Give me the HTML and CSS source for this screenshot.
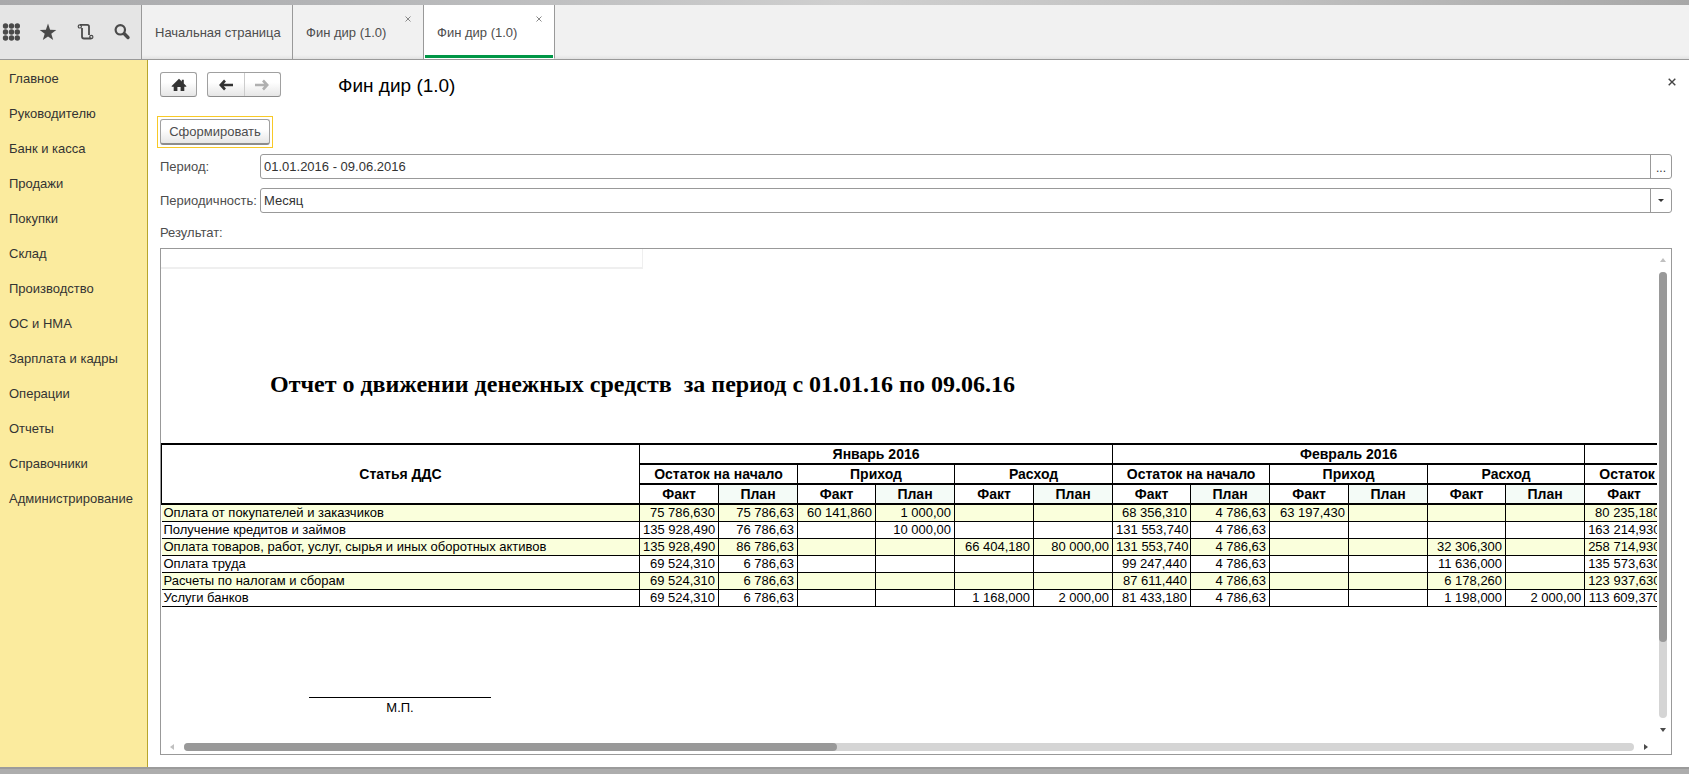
FILE: index.html
```html
<!DOCTYPE html>
<html lang="ru">
<head>
<meta charset="utf-8">
<title>Фин дир (1.0)</title>
<link rel="stylesheet" href="styles.css">
</head>
<body>
<div class="app">
  <div class="edge-top"></div>
  <header class="topbar">
    <div class="tools">
      <button class="tool" type="button" aria-label="Меню">
        <svg width="18" height="18" viewBox="0 0 18 18" fill="#4a4a4a"><circle cx="3.500" cy="3" r="2.700"/><circle cx="9.500" cy="3" r="2.700"/><circle cx="15.300" cy="3" r="2.700"/><circle cx="3.500" cy="9" r="2.700"/><circle cx="9.500" cy="9" r="2.700"/><circle cx="15.300" cy="9" r="2.700"/><circle cx="3.500" cy="15" r="2.700"/><circle cx="9.500" cy="15" r="2.700"/><circle cx="15.300" cy="15" r="2.700"/></svg>
      </button>
      <button class="tool" type="button" aria-label="Избранное">
        <svg width="18" height="18" viewBox="0 0 18 18" fill="#4a4a4a"><path d="M9 .6l2.100 6.200 6.200.1-5 3.900 1.900 6.300L9 13.400l-5.200 3.700 1.900-6.300-5-3.900 6.200-.1z"/></svg>
      </button>
      <button class="tool" type="button" aria-label="История">
        <svg width="18" height="18" viewBox="0 0 18 18" fill="none" stroke="#4a4a4a"><path stroke-width="1.800" d="M4 1.900h7.300q1.700 0 1.700 1.700V12"/><path stroke-width="1.800" d="M6 5v8.500q0 2 2 2h7.500"/><circle cx="3.800" cy="3.400" r="1.600" stroke-width="1.200"/><circle cx="15.300" cy="13.900" r="1.600" stroke-width="1.200"/></svg>
      </button>
      <button class="tool" type="button" aria-label="Поиск">
        <svg width="18" height="18" viewBox="0 0 18 18" fill="none" stroke="#4a4a4a"><circle cx="7.300" cy="6.800" r="4.700" stroke-width="2.200"/><path d="M11.300 10.800l3.700 3.700" stroke-width="3.400" stroke-linecap="round"/></svg>
      </button>
    </div>
    <nav class="tabs">
      <a class="tab tab-home" href="#">Начальная страница</a>
      <a class="tab" href="#">Фин дир (1.0)<svg class="tab-close" width="6" height="6" viewBox="0 0 6 6" stroke="#888"><path d="M.5.5l5 5M5.500.5l-5 5"/></svg></a>
      <a class="tab tab-active" href="#">Фин дир (1.0)<svg class="tab-close" width="6" height="6" viewBox="0 0 6 6" stroke="#888"><path d="M.5.5l5 5M5.500.5l-5 5"/></svg></a>
    </nav>
  </header>
  <div class="body">
    <nav class="sidebar">
      <a href="#">Главное</a>
      <a href="#">Руководителю</a>
      <a href="#">Банк и касса</a>
      <a href="#">Продажи</a>
      <a href="#">Покупки</a>
      <a href="#">Склад</a>
      <a href="#">Производство</a>
      <a href="#">ОС и НМА</a>
      <a href="#">Зарплата и кадры</a>
      <a href="#">Операции</a>
      <a href="#">Отчеты</a>
      <a href="#">Справочники</a>
      <a href="#">Администрирование</a>
    </nav>
    <main class="main">
      <div class="titlebar">
        <button class="btn btn-home" type="button" aria-label="Домой">
          <svg width="16" height="14" viewBox="0 0 16 14" fill="#333"><path d="M8 .8l2.800 2.700V1.800h2v3.600L15.300 8v.8H13.300V13H9.600V9H6.400v4H2.700V8.800H.7V8z"/></svg>
        </button>
        <div class="btn nav-pair">
          <button type="button" aria-label="Назад"><svg width="14" height="12" viewBox="0 0 14 12"><path d="M6 1.500L1.800 6 6 10.500M2 6h12" fill="none" stroke="#333" stroke-width="2.600"/></svg></button>
          <button type="button" aria-label="Вперед"><svg width="14" height="12" viewBox="0 0 14 12"><path d="M8 1.500L12.200 6 8 10.500M12 6H0" fill="none" stroke="#b0b0b0" stroke-width="2.600"/></svg></button>
        </div>
        <h1>Фин дир (1.0)</h1>
        <button class="close" type="button" aria-label="Закрыть"><svg width="8" height="8" viewBox="0 0 8 8" stroke="#444" stroke-width="1.400"><path d="M.7.7l6.600 6.600M7.300.7L.7 7.300"/></svg></button>
      </div>
      <div class="command"><button class="btn btn-run" type="button">Сформировать</button></div>
      <div class="field">
        <label for="period">Период:</label>
        <div class="box"><input id="period" type="text" value="01.01.2016 - 09.06.2016"><button type="button" class="more">...</button></div>
      </div>
      <div class="field">
        <label for="step">Периодичность:</label>
        <div class="box"><select id="step"><option>Месяц</option></select><span class="drop"><svg width="6" height="3" viewBox="0 0 6 3" fill="#333"><path d="M0 0h6L3 3z"/></svg></span></div>
      </div>
      <div class="result-label">Результат:</div>
      <section class="panel">
        <div class="sheet">
          <div class="frame"></div>
          <h2>Отчет о движении денежных средств &nbsp;за период с 01.01.16 по 09.06.16</h2>
          <table>
            <colgroup><col class="c-name"><col class="c-a" span="2"><col class="c-b"><col class="c-a" span="3"><col class="c-b"><col class="c-a" span="3"><col class="c-b"><col class="c-a" span="3"></colgroup>
            <thead>
              <tr><th rowspan="3">Статья ДДС</th><th colspan="6">Январь 2016</th><th colspan="6">Февраль 2016</th><th colspan="2"></th></tr>
              <tr><th colspan="2">Остаток на начало</th><th colspan="2">Приход</th><th colspan="2">Расход</th><th colspan="2">Остаток на начало</th><th colspan="2">Приход</th><th colspan="2">Расход</th><th colspan="2">Остаток на начало</th></tr>
              <tr><th>Факт</th><th class="p">План</th><th>Факт</th><th class="p">План</th><th>Факт</th><th class="p">План</th><th>Факт</th><th class="p">План</th><th>Факт</th><th class="p">План</th><th>Факт</th><th class="p">План</th><th>Факт</th><th class="p"></th></tr>
            </thead>
            <tbody>
              <tr><td>Оплата от покупателей и заказчиков</td><td>75 786,630</td><td>75 786,63</td><td>60 141,860</td><td>1 000,00</td><td></td><td></td><td>68 356,310</td><td>4 786,63</td><td>63 197,430</td><td></td><td></td><td></td><td>80 235,180</td><td></td></tr>
              <tr><td>Получение кредитов и займов</td><td>135 928,490</td><td>76 786,63</td><td></td><td>10 000,00</td><td></td><td></td><td>131 553,740</td><td>4 786,63</td><td></td><td></td><td></td><td></td><td>163 214,930</td><td></td></tr>
              <tr><td>Оплата товаров, работ, услуг, сырья и иных оборотных активов</td><td>135 928,490</td><td>86 786,63</td><td></td><td></td><td>66 404,180</td><td>80 000,00</td><td>131 553,740</td><td>4 786,63</td><td></td><td></td><td>32 306,300</td><td></td><td>258 714,930</td><td></td></tr>
              <tr><td>Оплата труда</td><td>69 524,310</td><td>6 786,63</td><td></td><td></td><td></td><td></td><td>99 247,440</td><td>4 786,63</td><td></td><td></td><td>11 636,000</td><td></td><td>135 573,630</td><td></td></tr>
              <tr><td>Расчеты по налогам и сборам</td><td>69 524,310</td><td>6 786,63</td><td></td><td></td><td></td><td></td><td>87 611,440</td><td>4 786,63</td><td></td><td></td><td>6 178,260</td><td></td><td>123 937,630</td><td></td></tr>
              <tr><td>Услуги банков</td><td>69 524,310</td><td>6 786,63</td><td></td><td></td><td>1 168,000</td><td>2 000,00</td><td>81 433,180</td><td>4 786,63</td><td></td><td></td><td>1 198,000</td><td>2 000,00</td><td>113 609,370</td><td></td></tr>
            </tbody>
          </table>
          <div class="stamp">М.П.</div>
        </div>
        <div class="vbar">
          <svg width="6" height="4" viewBox="0 0 6 4" fill="#c0c0c0"><path d="M3 0l3 4H0z"/></svg>
          <div class="track"><div class="thumb"></div></div>
          <svg width="6" height="4" viewBox="0 0 6 4" fill="#4a4a4a"><path d="M0 0h6L3 4z"/></svg>
        </div>
        <div class="hbar">
          <svg width="4" height="6" viewBox="0 0 4 6" fill="#c0c0c0"><path d="M4 0v6L0 3z"/></svg>
          <div class="track"><div class="thumb"></div></div>
          <svg width="4" height="6" viewBox="0 0 4 6" fill="#4a4a4a"><path d="M0 0v6l4-3z"/></svg>
        </div>
      </section>
    </main>
  </div>
  <div class="edge-bottom"></div>
</div>
</body>
</html>
```
FILE: styles.css
```css
* { box-sizing: border-box; }
body { margin: 0; font: 13px/16px "Liberation Sans", Arial, sans-serif; color: #333; background: #fff; }
button, input, select { font: inherit; color: inherit; margin: 0; padding: 0; border: 0; background: none; }
svg { display: block; flex: none; }
a { color: inherit; text-decoration: none; }

.app { display: flex; flex-direction: column; height: 100vh; overflow: hidden; }
.edge-top { height: 5px; background: linear-gradient(90deg, #a9a9ab, #b4b5b7 20%, #cfcfcf 50%, #c0c0c0 75%, #a8a8a8); }
.edge-bottom { height: 7px; background: #adadad; border-top: 2px solid #9b9b9b; }

.topbar { display: flex; height: 55px; background: #f1f1f1; border-bottom: 1px solid #999; }
.tools { display: flex; align-items: center; gap: 19px; width: 142px; padding-left: 2px; background: #e5e5e5; border-right: 1px solid #999; }
.tool { width: 18px; height: 18px; }
.tabs { display: flex; flex: 1; background: linear-gradient(#f1f1f1 50px, #e2e2e2); }
.tab { position: relative; display: flex; align-items: center; width: 131px; padding: 2px 13px 0; border-right: 1px solid #999; color: #4d4d4d; white-space: nowrap; }
.tab-home { width: 151px; }
.tab-active { background: #fff; border-bottom: 1px solid #fff; }
.tab-active::after { content: ""; position: absolute; left: 1px; right: 1px; bottom: 0; height: 3px; background: #009646; }
.tab-close { position: absolute; top: 11px; right: 12px; }

.body { display: flex; flex: 1; min-height: 0; }
.sidebar { display: flex; flex-direction: column; flex: none; width: 148px; padding: 1px 0 0 9px; background: #fbeb9e; border-right: 1px solid #b8a52c; }
.sidebar a { line-height: 35px; }

.main { display: flex; flex-direction: column; flex: 1; min-width: 0; padding: 12px 17px 12px 12px; color: #4d4d4d; }
.titlebar { display: flex; align-items: center; height: 25px; }
.btn { height: 25px; border: 1px solid #a0a0a0; border-bottom-color: #8c8c8c; border-radius: 3px; background: linear-gradient(#fff 40%, #e6e6e6); }
.btn-home { display: flex; align-items: center; justify-content: center; width: 37px; }
.nav-pair { display: flex; width: 74px; margin-left: 10px; }
.nav-pair button { display: flex; flex: 1; align-items: center; justify-content: center; }
.nav-pair button + button { border-left: 1px solid #ccc; }
h1 { flex: 1; margin: 0 0 0 57px; padding-top: 2px; font-size: 19px; line-height: 24px; font-weight: normal; color: #000; }
.close { display: flex; align-items: center; align-self: flex-start; width: 8px; height: 20px; margin-right: -4px; }
.command { align-self: flex-start; margin: 19px 0 6px -3px; padding: 2px; border: 1px solid #f8c927; }
.btn-run { display: block; width: 110px; height: 26px; border-bottom-width: 2px; }

.field { display: flex; align-items: center; margin-bottom: 9px; }
.field label { width: 100px; }
.box { display: flex; flex: 1; height: 25px; border: 1px solid #999; border-radius: 3px; color: #333; }
.box input, .box select { flex: 1; padding: 0 3px; appearance: none; outline: 0; }
.more, .drop { display: flex; align-items: center; justify-content: center; width: 21px; border-left: 1px solid #999; }
.more { padding-top: 3px; font-size: 12px; }
.result-label { line-height: 16px; margin: 3px 0 7px; }

.panel { display: grid; grid-template: minmax(0, 1fr) 14px / minmax(0, 1fr) 14px; flex: 1; min-height: 0; border: 1px solid #999; }
.sheet { overflow: hidden; color: #000; }
.frame { width: 482px; height: 20px; border: solid #efefef; border-width: 0 1px 2px 0; }
h2 { margin: 102px 0 46px 109px; font: bold 24px/26px "Liberation Serif", "Times New Roman", serif; white-space: nowrap; }
table { width: 1581px; table-layout: fixed; border-collapse: collapse; font-size: 13px; line-height: 14px; }
.c-name { width: 478px; }
.c-a { width: 79px; }
.c-b { width: 78px; }
th, td { padding: 0 3px; border: 1px solid #000; white-space: nowrap; }
th { height: 20px; font-size: 14px; line-height: 16px; padding: 0; border-width: 2px 1px; }
.p { background: #f4fbf7; }
td { height: 17px; text-align: right; }
td:first-child { padding-left: 2px; border-left: 0; text-align: left; }
tbody tr:nth-child(odd) { background: #faffdc; }
.stamp { width: 182px; margin: 90px 0 0 148px; padding-top: 2px; border-top: 1px solid #000; text-align: center; }

.track { flex: 1; border-radius: 4px; background: #d5d5d5; }
.thumb { border-radius: 4px; background: #999; }
.vbar { display: flex; flex-direction: column; align-items: center; gap: 10px; padding: 9px 2px 8px 0; }
.vbar .track, .vbar .thumb { width: 8px; }
.vbar .thumb { height: 83%; }
.hbar { display: flex; align-items: center; gap: 10px; padding: 0 9px; }
.hbar .track, .hbar .thumb { height: 8px; }
.hbar .thumb { width: 45%; }
```
